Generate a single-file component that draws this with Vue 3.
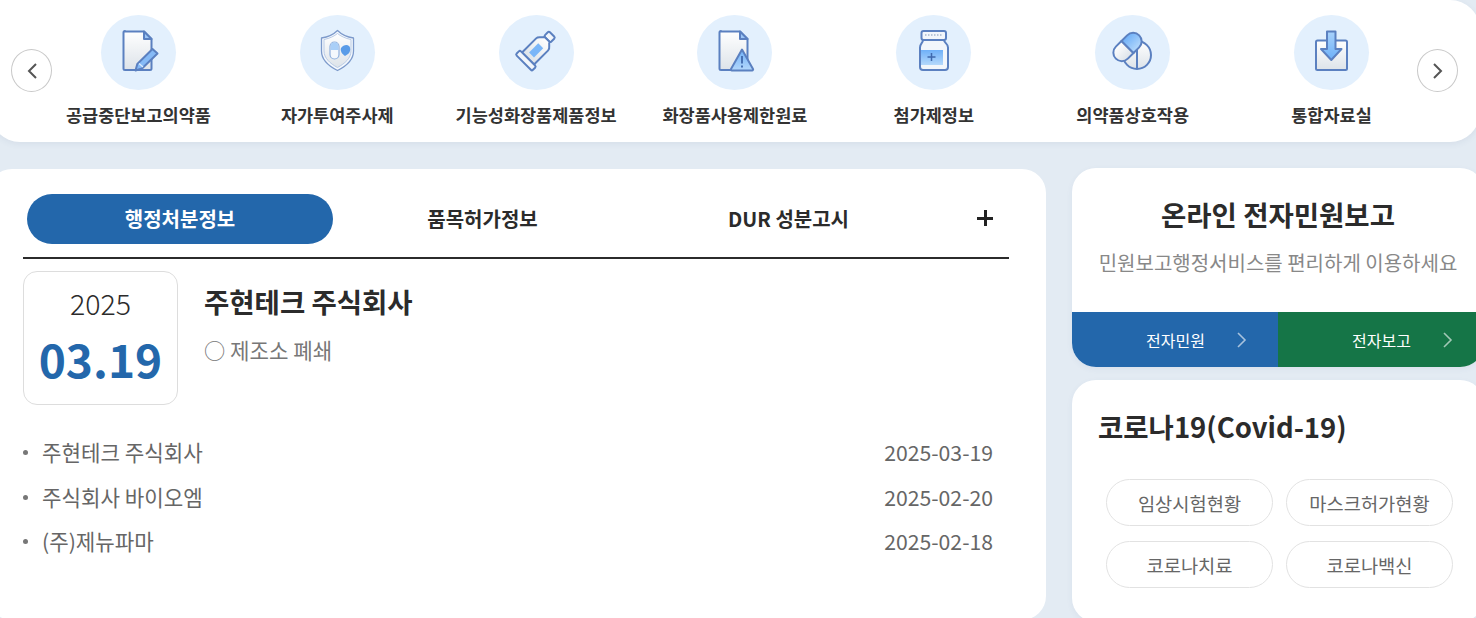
<script setup>
const menus = [
  { name: "공급중단보고의약품", icon: "report" },
  { name: "자가투여주사제", icon: "shield" },
  { name: "기능성화장품제품정보", icon: "tube" },
  { name: "화장품사용제한원료", icon: "warn" },
  { name: "첨가제정보", icon: "bottle" },
  { name: "의약품상호작용", icon: "pill" },
  { name: "통합자료실", icon: "download" }
];

const notices = [
  { title: "주현테크 주식회사", date: "2025-03-19" },
  { title: "주식회사 바이오엠", date: "2025-02-20" },
  { title: "(주)제뉴파마", date: "2025-02-18" }
];

const covidLinks = ["임상시험현황", "마스크허가현황", "코로나치료", "코로나백신"];
</script>

<template>
  <main class="page">
    <svg class="defs" width="0" height="0" aria-hidden="true">
      <defs>
        <linearGradient id="paper" x1="0" y1="0" x2="0" y2="1">
          <stop offset="0" stop-color="#ffffff" />
          <stop offset="1" stop-color="#dde3e9" />
        </linearGradient>
        <linearGradient id="sky" x1="0" y1="0" x2="0" y2="1">
          <stop offset="0" stop-color="#6fb0f8" />
          <stop offset="1" stop-color="#b4d8fb" />
        </linearGradient>
        <linearGradient id="sky2" x1="0" y1="0" x2="0" y2="1">
          <stop offset="0" stop-color="#a9d2fb" />
          <stop offset="1" stop-color="#6cb0f8" />
        </linearGradient>
      </defs>
    </svg>

    <nav class="quick">
      <button class="arrow">
        <svg width="14" height="20" viewBox="0 0 14 20"><path d="M11 3 4 10l7 7" /></svg>
      </button>
      <ul class="quick-list">
        <li v-for="m in menus" :key="m.name" class="quick-item">
          <span class="circle">
            <svg class="icon" width="75" height="75" viewBox="0 0 75 75">
              <g v-if="m.icon === 'report'">
                <path class="line" fill="url(#paper)" d="M24 16.500h19l7.500 7.500v29.500a1.500 1.500 0 0 1-1.500 1.500H24a1.500 1.500 0 0 1-1.500-1.500v-36a1.500 1.500 0 0 1 1.500-1.500z" />
                <path class="line" fill="#9cc6f7" d="M43 16.500v7.500h7.500z" />
                <path class="line" fill="#86baf6" d="M51.500 34l5 4.500L41 53.500l-6.500 2 1.800-6.500z" />
                <path d="M38 48.500l4 3.500" stroke="#dcecfd" stroke-width="1.300" />
              </g>
              <g v-else-if="m.icon === 'shield'">
                <path class="line thin" fill="#f4f8fd" d="M37.500 15.500c3 3 9 6.500 16 7.500v13c0 8.500-7 15-16 19.500-9-4.500-16-11-16-19.500V23c7-1 13-4.500 16-7.500z" />
                <path fill="url(#paper)" stroke="#b9cbe6" stroke-width="1" d="M37.500 18.500c3 2.500 8 5 13.500 6v11.500c0 7-6 12.500-13.500 16.500-7.500-4-13.500-9.500-13.500-16.500V24.500c5.500-1 10.500-3.500 13.500-6z" />
                <rect x="30" y="27" width="9" height="17" rx="4.500" fill="#f4f8fd" stroke="#8fb0de" stroke-width="1.200" />
                <path fill="#a9cff8" d="M30.600 35v-3.500a3.900 3.900 0 0 1 7.800 0V35z" />
                <path fill="#5a9ce8" d="M41 33c2-3 6-4 8-2s1.500 6-1 8l-3 2c-3-2-5-5-4-8z" />
              </g>
              <g v-else-if="m.icon === 'tube'" transform="rotate(45 37.500 35)">
                <rect class="line" x="33" y="13" width="9" height="7" rx="1.500" fill="#f2f6fb" />
                <path class="line" fill="url(#paper)" d="M34 20h7c1 3 5 3.500 5 7v20H29V27c0-3.500 4-4 5-7z" />
                <rect x="34" y="29" width="7" height="13" fill="#7ab6f8" />
                <rect class="line" x="26" y="47" width="23" height="6" rx="1.500" fill="#f2f6fb" />
              </g>
              <g v-else-if="m.icon === 'warn'">
                <path class="line" fill="url(#paper)" d="M24 16.500h19l7.500 7.500v29.500a1.500 1.500 0 0 1-1.500 1.500H24a1.500 1.500 0 0 1-1.500-1.500v-36a1.500 1.500 0 0 1 1.500-1.500z" />
                <path class="line" fill="#9cc6f7" d="M43 16.500v7.500h7.500z" />
                <path class="line" fill="url(#sky)" d="M45 34.500l11 19.500a1 1 0 0 1-1 1.500H35a1 1 0 0 1-1-1.500z" />
                <path d="M45 41v7.500M45 50.500v2" stroke="#3f68ac" stroke-width="1.800" />
              </g>
              <g v-else-if="m.icon === 'bottle'">
                <rect class="line" x="25.500" y="16" width="24.500" height="9" rx="2" fill="#f2f6fb" />
                <path d="M29 20h17" stroke="#b9c6d8" stroke-width="2" stroke-dasharray="1.500 1.500" />
                <path class="line" fill="#f2f6fb" d="M27 25h21c0 3 4 3.500 4 7.500V52a3 3 0 0 1-3 3H27a3 3 0 0 1-3-3V32.500c0-4 3-4.500 3-7.500z" />
                <rect x="25" y="35" width="22" height="15" fill="url(#sky)" />
                <path d="M35.500 38v8M31.500 42h8" stroke="#3f68ac" stroke-width="1.500" />
              </g>
              <g v-else-if="m.icon === 'pill'">
                <circle class="line" cx="42" cy="40" r="14" fill="url(#paper)" />
                <path class="line" d="M42 26v28" fill="none" />
                <g transform="rotate(-45 32.500 32)">
                  <path class="line" fill="url(#paper)" d="M32.500 23.500h-8a8.500 8.500 0 0 0 0 17h8z" />
                  <path class="line" fill="url(#sky)" d="M32.500 23.500h8a8.500 8.500 0 0 1 0 17h-8z" />
                </g>
              </g>
              <g v-else>
                <rect class="line" x="22" y="25.500" width="31" height="29.500" rx="1.500" fill="url(#paper)" />
                <path class="line" fill="url(#sky2)" d="M33 16.500h8.500V34h6L37.300 45 27 34h6z" />
              </g>
            </svg>
          </span>
          <span class="quick-name">{{ m.name }}</span>
        </li>
      </ul>
      <button class="arrow">
        <svg width="14" height="20" viewBox="0 0 14 20"><path d="M4 3l7 7-7 7" /></svg>
      </button>
    </nav>

    <section class="content">
      <div class="board">
        <div class="tabs">
          <a class="tab tab-1 on">행정처분정보</a>
          <a class="tab tab-2">품목허가정보</a>
          <a class="tab tab-3">DUR 성분고시</a>
          <span class="more"></span>
        </div>

        <div class="feature">
          <div class="date-box">
            <span class="year">2025</span>
            <strong class="day">03.19</strong>
          </div>
          <div class="feature-text">
            <h2>주현테크 주식회사</h2>
            <p>○ 제조소 폐쇄</p>
          </div>
        </div>

        <ul class="notice">
          <li v-for="n in notices" :key="n.date">
            <span class="notice-title">{{ n.title }}</span>
            <span class="notice-date">{{ n.date }}</span>
          </li>
        </ul>
      </div>

      <aside class="side">
        <div class="card online">
          <h2>온라인 전자민원보고</h2>
          <p>민원보고행정서비스를 편리하게 이용하세요</p>
          <div class="online-links">
            <a class="blue">전자민원<svg width="12" height="18" viewBox="0 0 12 18"><path d="M2 2l7 7-7 7" /></svg></a>
            <a class="green">전자보고<svg width="12" height="18" viewBox="0 0 12 18"><path d="M2 2l7 7-7 7" /></svg></a>
          </div>
        </div>
        <div class="card covid">
          <h2>코로나19(Covid-19)</h2>
          <div class="covid-links">
            <a v-for="c in covidLinks" :key="c">{{ c }}</a>
          </div>
        </div>
      </aside>
    </section>
  </main>
</template>

<style>
html, body {
  margin: 0;
  overflow: hidden;
  background: #e3ebf3;
}
</style>

<style scoped>
.page {
  width: 1476px;
  height: 618px;
  overflow: hidden;
  font-family: "Noto Sans CJK KR", "Noto Sans", sans-serif;
  color: #2b2b2b;
}

.defs {
  position: absolute;
}

ul {
  list-style: none;
  margin: 0;
  padding: 0;
}

h2, p {
  margin: 0;
}

.quick {
  display: flex;
  align-items: flex-start;
  box-sizing: border-box;
  width: 1490px;
  height: 142px;
  margin-left: -10px;
  padding: 49px 0 0 21px;
  background: #fff;
  border-radius: 0 30px 30px 30px;
  box-shadow: 0 2px 6px rgba(60, 90, 130, 0.08);
}

.arrow {
  flex: none;
  display: flex;
  align-items: center;
  justify-content: center;
  box-sizing: border-box;
  width: 41px;
  height: 43px;
  padding: 0;
  background: #fff;
  border: 1px solid #c9c9c9;
  border-radius: 50%;
}

.arrow path {
  fill: none;
  stroke: #555;
  stroke-width: 2;
}

.quick-list {
  display: grid;
  grid-template-columns: repeat(7, 198.85px);
  flex: none;
  margin: -34px 0 0 -13px;
}

.quick-list + .arrow {
  margin-left: -14px;
}

.quick-item {
  display: flex;
  flex-direction: column;
  align-items: center;
}

.circle {
  width: 75px;
  height: 75px;
  border-radius: 50%;
  background: #e3f0fd;
}

.icon {
  display: block;
  filter: blur(0.35px);
}

.line {
  stroke: #5b80c0;
  stroke-width: 2;
  stroke-linejoin: round;
}

.line.thin {
  stroke: #7d9acb;
  stroke-width: 1.300;
}

.quick-name {
  margin-top: 13px;
  font-size: 17.500px;
  line-height: 24px;
  font-weight: 600;
  color: #333;
  white-space: nowrap;
}

.content {
  display: flex;
  align-items: flex-start;
  margin: 27px 0 0 -12px;
}

.board {
  flex: none;
  box-sizing: border-box;
  width: 1058px;
  height: 451px;
  padding: 25px 37px 0 35px;
  background: #fff;
  border-radius: 24px;
}

.tabs {
  display: flex;
  align-items: flex-start;
  box-sizing: border-box;
  height: 65px;
  padding-left: 4px;
  border-bottom: 2px solid #2b2b2b;
}

.tab {
  display: block;
  height: 50px;
  line-height: 50px;
  text-align: center;
  font-size: 20px;
  font-weight: 700;
  border-radius: 25px;
}

.tab-1 { width: 306px; }
.tab-2 { width: 299px; }
.tab-3 { width: 313px; }

.tab.on {
  background: #2367ab;
  color: #fff;
}

.more {
  position: relative;
  width: 16px;
  height: 16px;
  margin: 16px 0 0 32px;
}

.more::before,
.more::after {
  content: "";
  position: absolute;
  background: #222;
}

.more::before {
  left: 0;
  top: 6.500px;
  width: 16px;
  height: 3px;
}

.more::after {
  left: 6.500px;
  top: 0;
  width: 3px;
  height: 16px;
}

.feature {
  display: flex;
  margin-top: 12px;
}

.date-box {
  flex: none;
  display: flex;
  flex-direction: column;
  align-items: center;
  box-sizing: border-box;
  width: 155px;
  height: 134px;
  padding-top: 10px;
  border: 1px solid #ddd;
  border-radius: 14px;
}

.year {
  font-size: 28.500px;
  line-height: 42px;
  font-weight: 300;
}

.day {
  margin-top: 2px;
  font-size: 46px;
  line-height: 64px;
  font-weight: 700;
  color: #2367ab;
}

.feature-text {
  margin-left: 26px;
}

.feature-text h2 {
  margin-top: 10px;
  font-size: 27.500px;
  line-height: 40px;
  font-weight: 700;
}

.feature-text p {
  margin-top: 14px;
  font-size: 21.200px;
  line-height: 30px;
  color: #777;
}

.notice {
  margin-top: 25px;
}

.notice li {
  display: flex;
  justify-content: space-between;
  height: 44.500px;
  line-height: 44.500px;
  padding-right: 16px;
  font-size: 21.200px;
  color: #666;
}

.notice-title {
  position: relative;
  padding-left: 19px;
}

.notice-title::before {
  content: "";
  position: absolute;
  left: 0;
  top: 20px;
  width: 5px;
  height: 5px;
  border-radius: 50%;
  background: #777;
}

.side {
  flex: none;
  display: flex;
  flex-direction: column;
  gap: 13px;
  width: 412px;
  margin: -1px 0 0 26px;
}

.card {
  overflow: hidden;
  background: #fff;
  border-radius: 24px;
  box-shadow: 0 2px 6px rgba(60, 90, 130, 0.06);
}

.online {
  height: 199px;
  text-align: center;
}

.online h2 {
  width: 412px;
  padding-top: 25px;
  font-size: 27.500px;
  line-height: 42px;
  font-weight: 700;
}

.online p {
  margin-top: 14px;
  font-size: 20px;
  line-height: 28px;
  color: #888;
}

.online-links {
  display: flex;
  margin-top: 35px;
}

.online-links a {
  display: flex;
  align-items: center;
  box-sizing: border-box;
  width: 206px;
  height: 55px;
  padding-left: 74px;
  font-size: 16px;
  color: #fff;
}

.online-links svg {
  margin-left: 31px;
}

.online-links path {
  fill: none;
  stroke: rgba(255, 255, 255, 0.6);
  stroke-width: 1.600;
}

.blue {
  background: #2367ab;
}

.green {
  background: #157547;
}

.covid {
  box-sizing: border-box;
  height: 242px;
  padding: 23px 26px 0;
}

.covid h2 {
  font-size: 27.500px;
  line-height: 46px;
  font-weight: 700;
}

.covid-links {
  display: grid;
  grid-template-columns: repeat(2, 167px);
  gap: 15px 13px;
  margin: 30px 0 0 8px;
}

.covid-links a {
  height: 47px;
  box-sizing: border-box;
  line-height: 45px;
  text-align: center;
  font-size: 18.700px;
  color: #666;
  border: 1px solid #e2e2e2;
  border-radius: 24px;
}
</style>
